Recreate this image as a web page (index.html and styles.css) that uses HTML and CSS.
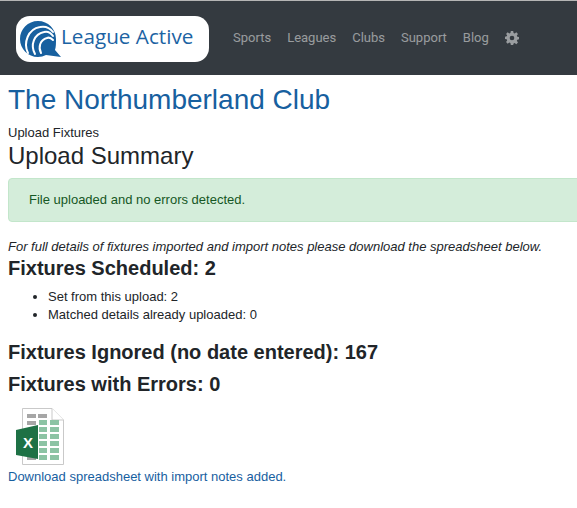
FILE: index.html
```html
<!DOCTYPE html>
<html lang="en">
<head>
    <meta charset="UTF-8">
    <meta name="viewport" content="width=device-width, initial-scale=1.0">
    <title>Upload Summary</title>
    <link rel="stylesheet" href="styles.css">
</head>
<body>
    <nav class="navbar">
        <a class="brand" href="#">
            <svg class="brand-logo" viewBox="0 0 42 36" width="42" height="36">
                <path d="M18 0C8 0 0 8 0 18s8 18 18 18c3 0 5.500-.7 8-2L41 36l-6-7c1-3 1-7 1-11C36 8 28 0 18 0z" fill="#17609f"/>
                <g fill="none" stroke="#fff" stroke-width="2" stroke-linecap="round">
                    <path d="M8 32C3 22 8 8 20 6c5-1 10 1 13 5"/>
                    <path d="M15 33C10 24 14 13 24 11c4-1 7 1 9 4"/>
                    <path d="M21 32C18 26 20 19 27 17c2-1 4 0 6 2"/>
                </g>
            </svg>
            <span class="brand-name">League Active</span>
        </a>
        <ul class="nav-links">
            <li><a href="#">Sports</a></li>
            <li><a href="#">Leagues</a></li>
            <li><a href="#">Clubs</a></li>
            <li><a href="#">Support</a></li>
            <li><a href="#">Blog</a></li>
            <li>
                <a href="#" aria-label="Settings">
                    <svg class="gear" viewBox="0 0 24 24" width="14" height="14">
                        <path fill-rule="evenodd" d="M10 0h4l.7 3.300 1.900.8L19.400 2.200l2.800 2.800-1.900 2.800.8 1.900L24 10.400v3.900l-2.900.7-.8 1.900 1.900 2.800-2.800 2.800-2.800-1.900-1.900.8L14 24h-4l-.7-3.300-1.900-.8-2.800 1.900-2.800-2.800 1.900-2.800-.8-1.900L0 13.600v-3.900l2.900-.7.800-1.900L1.800 5l2.800-2.800 2.800 1.900 1.900-.8zM12 8a4 4 0 1 0 0 8 4 4 0 0 0 0-8z"/>
                    </svg>
                </a>
            </li>
        </ul>
    </nav>

    <div class="content">
        <h1 class="club-name">The Northumberland Club</h1>
        <div class="crumb">Upload Fixtures</div>
        <h2 class="page-title">Upload Summary</h2>

        <div class="alert">File uploaded and no errors detected.</div>

        <p class="note">For full details of fixtures imported and import notes please download the spreadsheet below.</p>

        <h3>Fixtures Scheduled: 2</h3>
        <ul class="stats">
            <li>Set from this upload: 2</li>
            <li>Matched details already uploaded: 0</li>
        </ul>

        <h3>Fixtures Ignored (no date entered): 167</h3>
        <h3>Fixtures with Errors: 0</h3>

        <svg class="excel-icon" viewBox="0 0 48 57" width="48" height="57">
            <path d="M6.500 .5H36L47.500 12V56.500H6.500z" fill="#fff" stroke="#c9c9c9"/>
            <path d="M36 .5V12H47.500" fill="#fff" stroke="#c9c9c9"/>
            <g fill="#a6a6a6">
                <rect x="11" y="6" width="9" height="4"/>
                <rect x="22" y="6" width="9" height="4"/>
                <rect x="11" y="13" width="9" height="4"/>
            </g>
            <g fill="#8cc3a4">
                <rect x="23" y="12" width="8" height="5"/><rect x="34" y="12" width="9" height="5"/>
                <rect x="23" y="19" width="8" height="5"/><rect x="34" y="19" width="9" height="5"/>
                <rect x="23" y="26" width="8" height="5"/><rect x="34" y="26" width="9" height="5"/>
                <rect x="23" y="33" width="8" height="5"/><rect x="34" y="33" width="9" height="5"/>
                <rect x="23" y="40" width="8" height="5"/><rect x="34" y="40" width="9" height="5"/>
                <rect x="23" y="47" width="8" height="5"/><rect x="34" y="47" width="9" height="5"/>
            </g>
            <rect x="11" y="48" width="9" height="4" fill="#a6a6a6"/>
            <path d="M0 22L22 17V51L0 47z" fill="#1e7145"/>
            <text x="7" y="40" class="excel-x">X</text>
        </svg>
        <a class="download" href="#">Download spreadsheet with import notes added.</a>
    </div>
</body>
</html>
```

FILE: styles.css
```css
html {
    overflow: hidden;
}

body {
    font-family: "Liberation Sans", Arial, sans-serif;
    font-size: 13px;
    line-height: 18px;
    color: #212529;
    background-color: #fff;
    margin: 0;
    padding: 0;
    overflow: hidden;
}

.navbar {
    display: flex;
    align-items: center;
    height: 74px;
    border-top: 1px solid #b5b5b5;
    padding-left: 16px;
    background-color: #343a40;
}

.brand {
    display: flex;
    align-items: center;
    width: 193px;
    height: 46px;
    margin-top: 1px;
    padding-left: 4px;
    box-sizing: border-box;
    background-color: #fff;
    border-radius: 14px;
    text-decoration: none;
}

.brand-name {
    font-family: "Open Sans", sans-serif;
    font-size: 20.700px;
    color: #1c63a3;
    margin: -6px 0 0 -1px;
}

.nav-links {
    display: flex;
    align-items: center;
    gap: 16px;
    list-style: none;
    margin: 0 0 0 24px;
    padding: 0;
}

.nav-links a {
    display: flex;
    align-items: center;
    font-family: Roboto, sans-serif;
    font-size: 13px;
    color: rgba(255, 255, 255, 0.5);
    text-decoration: none;
}

.gear {
    fill: rgba(255, 255, 255, 0.5);
}

.content {
    padding: 0 0 0 8px;
}

.club-name {
    font-size: 28px;
    font-weight: normal;
    line-height: 1.2;
    color: #17609f;
    margin: 8px 0 7px;
}

.crumb {
    line-height: 17px;
}

.page-title {
    font-size: 24px;
    font-weight: normal;
    line-height: 1.2;
    margin: 1px 0 8px;
}

.alert {
    padding: 12px 20px;
    height: 44px;
    box-sizing: border-box;
    color: #155724;
    background-color: #d4edda;
    border: 1px solid #c3e6cb;
    border-radius: 4px;
    margin: 0 -20px 16px 0;
}

.note {
    font-style: italic;
    margin: 0;
}

h3 {
    font-size: 20px;
    font-weight: bold;
    line-height: 1.2;
    margin: 0 0 8px;
}

.stats {
    margin: 0 0 16px;
    padding-left: 40px;
}

.excel-icon {
    display: block;
    margin: 12px 0 3px 8px;
}

.excel-x {
    font-family: "Liberation Sans", Arial, sans-serif;
    font-size: 15px;
    font-weight: bold;
    fill: #fff;
}

.download {
    color: #17609f;
    text-decoration: none;
}
```
